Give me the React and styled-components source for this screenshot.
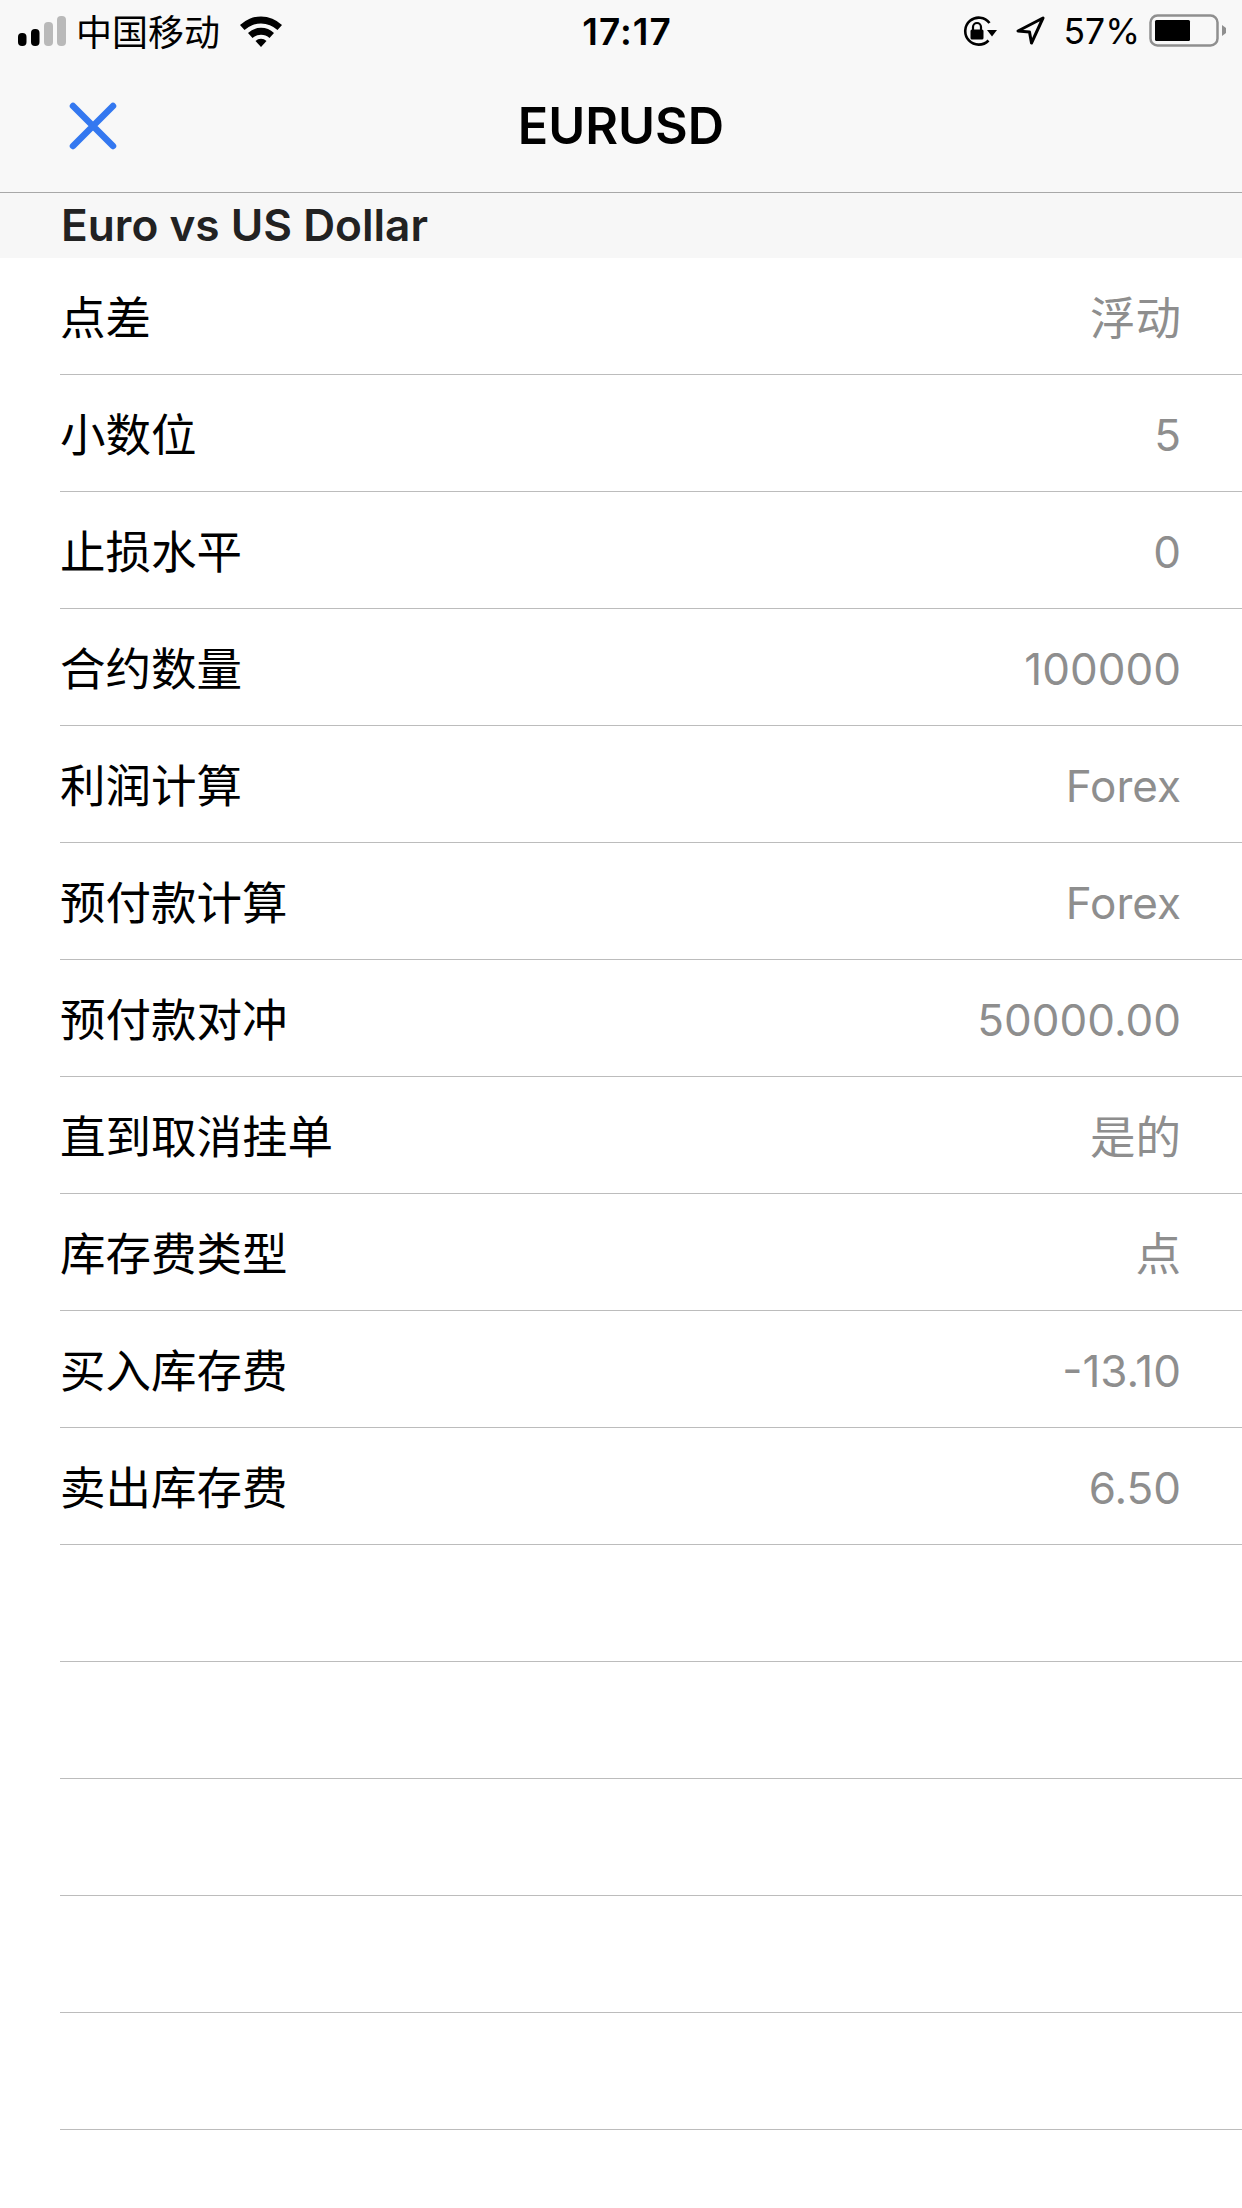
import React from "react";
import styled, { createGlobalStyle } from "styled-components";

const Global = createGlobalStyle`
  html, body { margin: 0; padding: 0; background: #fff; }
  body { font-family: Inter, "Noto Sans CJK SC", sans-serif; }
`;

const Page = styled.div`
  width: 1242px;
  height: 2208px;
  overflow: hidden;
  background: #fff;
`;

const Header = styled.header`
  background: #f8f8f8;
  border-bottom: 1px solid #a8a8a8;
  box-sizing: border-box;
  height: 193px;
`;

const StatusBar = styled.div`
  height: 60px;
  display: grid;
  grid-template-columns: 1fr auto 1fr;
  align-items: center;
  padding: 0 6px 0 18px;
  color: #000;
`;

const StatusLeft = styled.div`
  display: flex;
  align-items: center;
`;

const Carrier = styled.span`
  font-size: 36px;
  line-height: 60px;
  margin-left: 10px;
  margin-right: 19px;
  padding-bottom: 2px;
  font-family: "Noto Sans CJK SC", sans-serif;
  font-weight: 400;
`;

const Time = styled.span`
  font-size: 37px;
  font-weight: 600;
  line-height: 60px;
  letter-spacing: 1px;
  padding-top: 2px;
`;

const StatusRight = styled.div`
  display: flex;
  align-items: center;
  justify-content: flex-end;
  padding-right: 10px;
`;

const Percent = styled.span`
  font-size: 35.5px;
  font-weight: 400;
  margin: 0 9px 0 17px;
  padding-top: 1px;
`;

const NavBar = styled.div`
  height: 132px;
  display: grid;
  grid-template-columns: 1fr auto 1fr;
  align-items: center;
`;

const CloseButton = styled.span`
  display: flex;
  margin-left: 68px;
`;

const Title = styled.h1`
  margin: 0;
  font-size: 50.3px;
  font-weight: 600;
  color: #000;
  line-height: 60px;
`;

const SectionHeader = styled.div`
  height: 65px;
  background: #f7f7f7;
  padding-left: 61px;
  font-size: 44.2px;
  font-weight: 600;
  color: #222;
  line-height: 64px;
`;

const RowItem = styled.div`
  height: 117px;
  box-sizing: border-box;
  margin-left: 60px;
  padding-right: 61px;
  border-bottom: 1px solid #bcbcbc;
  display: flex;
  align-items: center;
  justify-content: space-between;
`;

const Label = styled.span`
  color: #000;
  font-family: "Noto Sans CJK SC", sans-serif;
  font-weight: 400;
  font-size: 45.5px;
  padding-bottom: 2px;
`;

const Value = styled.span`
  color: #8e8e8e;
  font-size: ${(p) => (p.$latin ? "44px" : "45.5px")};
  padding-top: ${(p) => (p.$latin ? "3px" : "0")};
  padding-bottom: ${(p) => (p.$latin ? "0" : "2px")};
`;

const Signal = () => (
  <svg width="48" height="30" viewBox="0 0 48 30">
    <rect x="0" y="17" width="8.5" height="13" rx="4" fill="#000" />
    <rect x="13" y="13" width="8.5" height="17" rx="4" fill="#000" />
    <rect x="26" y="6" width="9" height="24" rx="4" fill="#b9b9b9" />
    <rect x="39" y="0" width="9" height="30" rx="4" fill="#b9b9b9" />
  </svg>
);

const Wifi = () => (
  <svg width="44" height="32" viewBox="0 0 44 32">
    <path d="M1 10 A30 30 0 0 1 43 10 L38.5 15 A24 24 0 0 0 5.5 15 Z" fill="#000" />
    <path d="M9 18 A19 19 0 0 1 35 18 L30.5 23 A13 13 0 0 0 13.5 23 Z" fill="#000" />
    <path d="M16.5 26 A8 8 0 0 1 27.5 26 L22 32 Z" fill="#000" />
  </svg>
);

const RotationLock = () => (
  <svg width="36" height="30" viewBox="0 0 36 30">
    <path d="M26.5 24.5 A13.5 13.5 0 1 1 27.5 7" fill="none" stroke="#000" strokeWidth="2.6" />
    <path d="M25 14 L35 14 L30 20.5 Z" fill="#000" />
    <rect x="8.5" y="13.5" width="13" height="10" rx="1.5" fill="#000" />
    <path d="M11 14 V11 A4 4 0 0 1 19 11 V14" fill="none" stroke="#000" strokeWidth="2.2" />
  </svg>
);

const Location = () => (
  <svg width="30" height="30" viewBox="0 0 30 30" style={{ marginLeft: 18 }}>
    <path d="M2 15 L27 2 L15.5 27 L13.5 16 Z" fill="none" stroke="#000" strokeWidth="3" strokeLinejoin="round" />
  </svg>
);

const Battery = () => (
  <svg width="77" height="34" viewBox="0 0 77 34">
    <rect x="1.5" y="1.5" width="67" height="30" rx="7" fill="none" stroke="#8f8f8f" strokeWidth="2.5" />
    <rect x="6" y="6" width="35" height="21" rx="1.5" fill="#000" />
    <path d="M73 11 L77 14 V19 L73 22 Z" fill="#8f8f8f" />
  </svg>
);

const CloseIcon = () => (
  <svg width="50" height="50" viewBox="0 0 50 50">
    <path d="M5 5 L45 45 M45 5 L5 45" stroke="#3478f0" strokeWidth="6.5" strokeLinecap="round" />
  </svg>
);

const rows = [
  ["点差", "浮动"],
  ["小数位", "5"],
  ["止损水平", "0"],
  ["合约数量", "100000"],
  ["利润计算", "Forex"],
  ["预付款计算", "Forex"],
  ["预付款对冲", "50000.00"],
  ["直到取消挂单", "是的"],
  ["库存费类型", "点"],
  ["买入库存费", "-13.10"],
  ["卖出库存费", "6.50"],
  ["", ""],
  ["", ""],
  ["", ""],
  ["", ""],
  ["", ""],
  ["", ""],
];

export default function App() {
  return (
    <Page>
      <Global />
      <Header>
        <StatusBar>
          <StatusLeft>
            <Signal />
            <Carrier>中国移动</Carrier>
            <Wifi />
          </StatusLeft>
          <Time>17:17</Time>
          <StatusRight>
            <RotationLock />
            <Location />
            <Percent>57%</Percent>
            <Battery />
          </StatusRight>
        </StatusBar>
        <NavBar>
          <CloseButton><CloseIcon /></CloseButton>
          <Title>EURUSD</Title>
        </NavBar>
      </Header>
      <SectionHeader>Euro vs US Dollar</SectionHeader>
      {rows.map(([label, value], i) => (
        <RowItem key={i}>
          <Label>{label}</Label>
          <Value $latin={/[0-9A-Za-z]/.test(value)}>{value}</Value>
        </RowItem>
      ))}
    </Page>
  );
}
